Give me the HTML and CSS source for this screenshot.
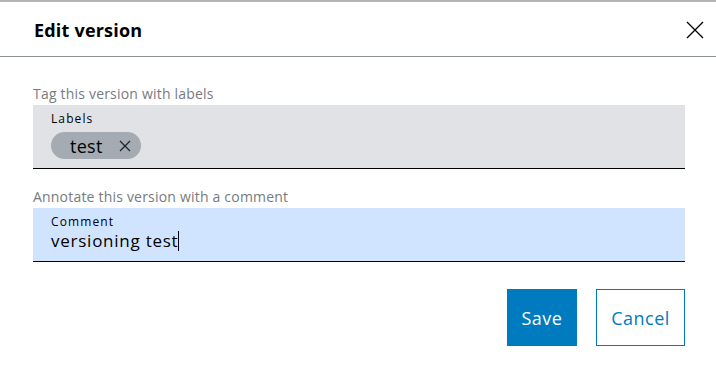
FILE: index.html
```html
<!DOCTYPE html>
<html>
<head>
<meta charset="utf-8">
<link rel="stylesheet" href="styles.css">
</head>
<body>
<div class="dialog">
  <div class="header">
    <h1 class="title">Edit version</h1>
    <button class="close" aria-label="Close">
      <svg width="18" height="18" viewBox="0 0 18 18"><path d="M1 1L17 17M17 1L1 17" stroke="#000" stroke-width="1.3" fill="none"/></svg>
    </button>
  </div>
  <div class="body">
    <div class="group">
      <div class="caption">Tag this version with labels</div>
      <div class="field field-gray">
        <div class="field-label">Labels</div>
        <div class="chips">
          <span class="chip">test
            <svg class="chip-x" width="12" height="12" viewBox="0 0 12 12"><path d="M1 1L11 11M11 1L1 11" stroke="#1f2328" stroke-width="1.2" fill="none"/></svg>
          </span>
        </div>
      </div>
    </div>
    <div class="group">
      <div class="caption">Annotate this version with a comment</div>
      <div class="field field-blue">
        <div class="field-label">Comment</div>
        <div class="field-value">versioning test<span class="caret"></span></div>
      </div>
    </div>
    <div class="actions">
      <button class="btn btn-primary">Save</button>
      <button class="btn btn-secondary">Cancel</button>
    </div>
  </div>
</div>
</body>
</html>
```

FILE: styles.css
```css
* { box-sizing: border-box; }
html, body { margin: 0; padding: 0; background: #fff; }
body { font-family: "Open Sans", "Noto Sans", sans-serif; color: #000; }
.dialog {
  width: 716px;
  height: 380px;
  border-top: 2px solid #b4b4b4;
}
.header {
  height: 55px;
  display: flex;
  align-items: center;
  justify-content: space-between;
  padding: 1px 12px 0 34px;
  border-bottom: 1px solid #8c9196;
}
.title {
  margin: 0;
  font-size: 18px;
  font-weight: 700;
  letter-spacing: 0.2px;
  line-height: 1;
}
.close {
  border: 0;
  background: none;
  padding: 0;
  width: 18px;
  height: 18px;
  display: flex;
}
.body {
  padding: 28px 31px 0 33px;
}
.group { margin-bottom: 19px; }
.caption {
  font-size: 14px;
  letter-spacing: 0.2px;
  color: #767b80;
  line-height: 17px;
  margin-bottom: 3px;
}
.field {
  padding: 8px 18px 0 18px;
  border-bottom: 1px solid #000;
}
.field-gray { background: #e0e2e5; height: 64px; }
.field-blue { background: #d1e4ff; height: 54px; }
.field-label {
  font-size: 12px;
  letter-spacing: 1.1px;
  line-height: 12px;
}
.chips { margin-top: 7px; display: flex; }
.chip {
  display: inline-flex;
  align-items: center;
  gap: 16px;
  height: 27px;
  padding: 0 10px 0 19px;
  border-radius: 14px;
  background: #a4abb3;
  font-size: 18px;
  letter-spacing: 0.3px;
  color: #000;
}
.chip-x { display: block; }
.field-value {
  font-size: 17px;
  letter-spacing: 0.75px;
  line-height: 16px;
  margin-top: 3px;
  display: flex;
  align-items: center;
}
.caret {
  display: inline-block;
  width: 1px;
  height: 20px;
  margin-left: 0;
  background: #000;
}
.actions {
  display: flex;
  justify-content: flex-end;
  gap: 19px;
  margin-top: 27px;
}
.btn {
  height: 57px;
  font-family: inherit;
  font-size: 18px;
  letter-spacing: 0.5px;
  padding: 0;
  border: 1px solid #007bc0;
  cursor: pointer;
}
.btn-primary { background: #007bc0; color: #fff; width: 70px; }
.btn-secondary { background: #fff; color: #007bc0; width: 89px; }
```
